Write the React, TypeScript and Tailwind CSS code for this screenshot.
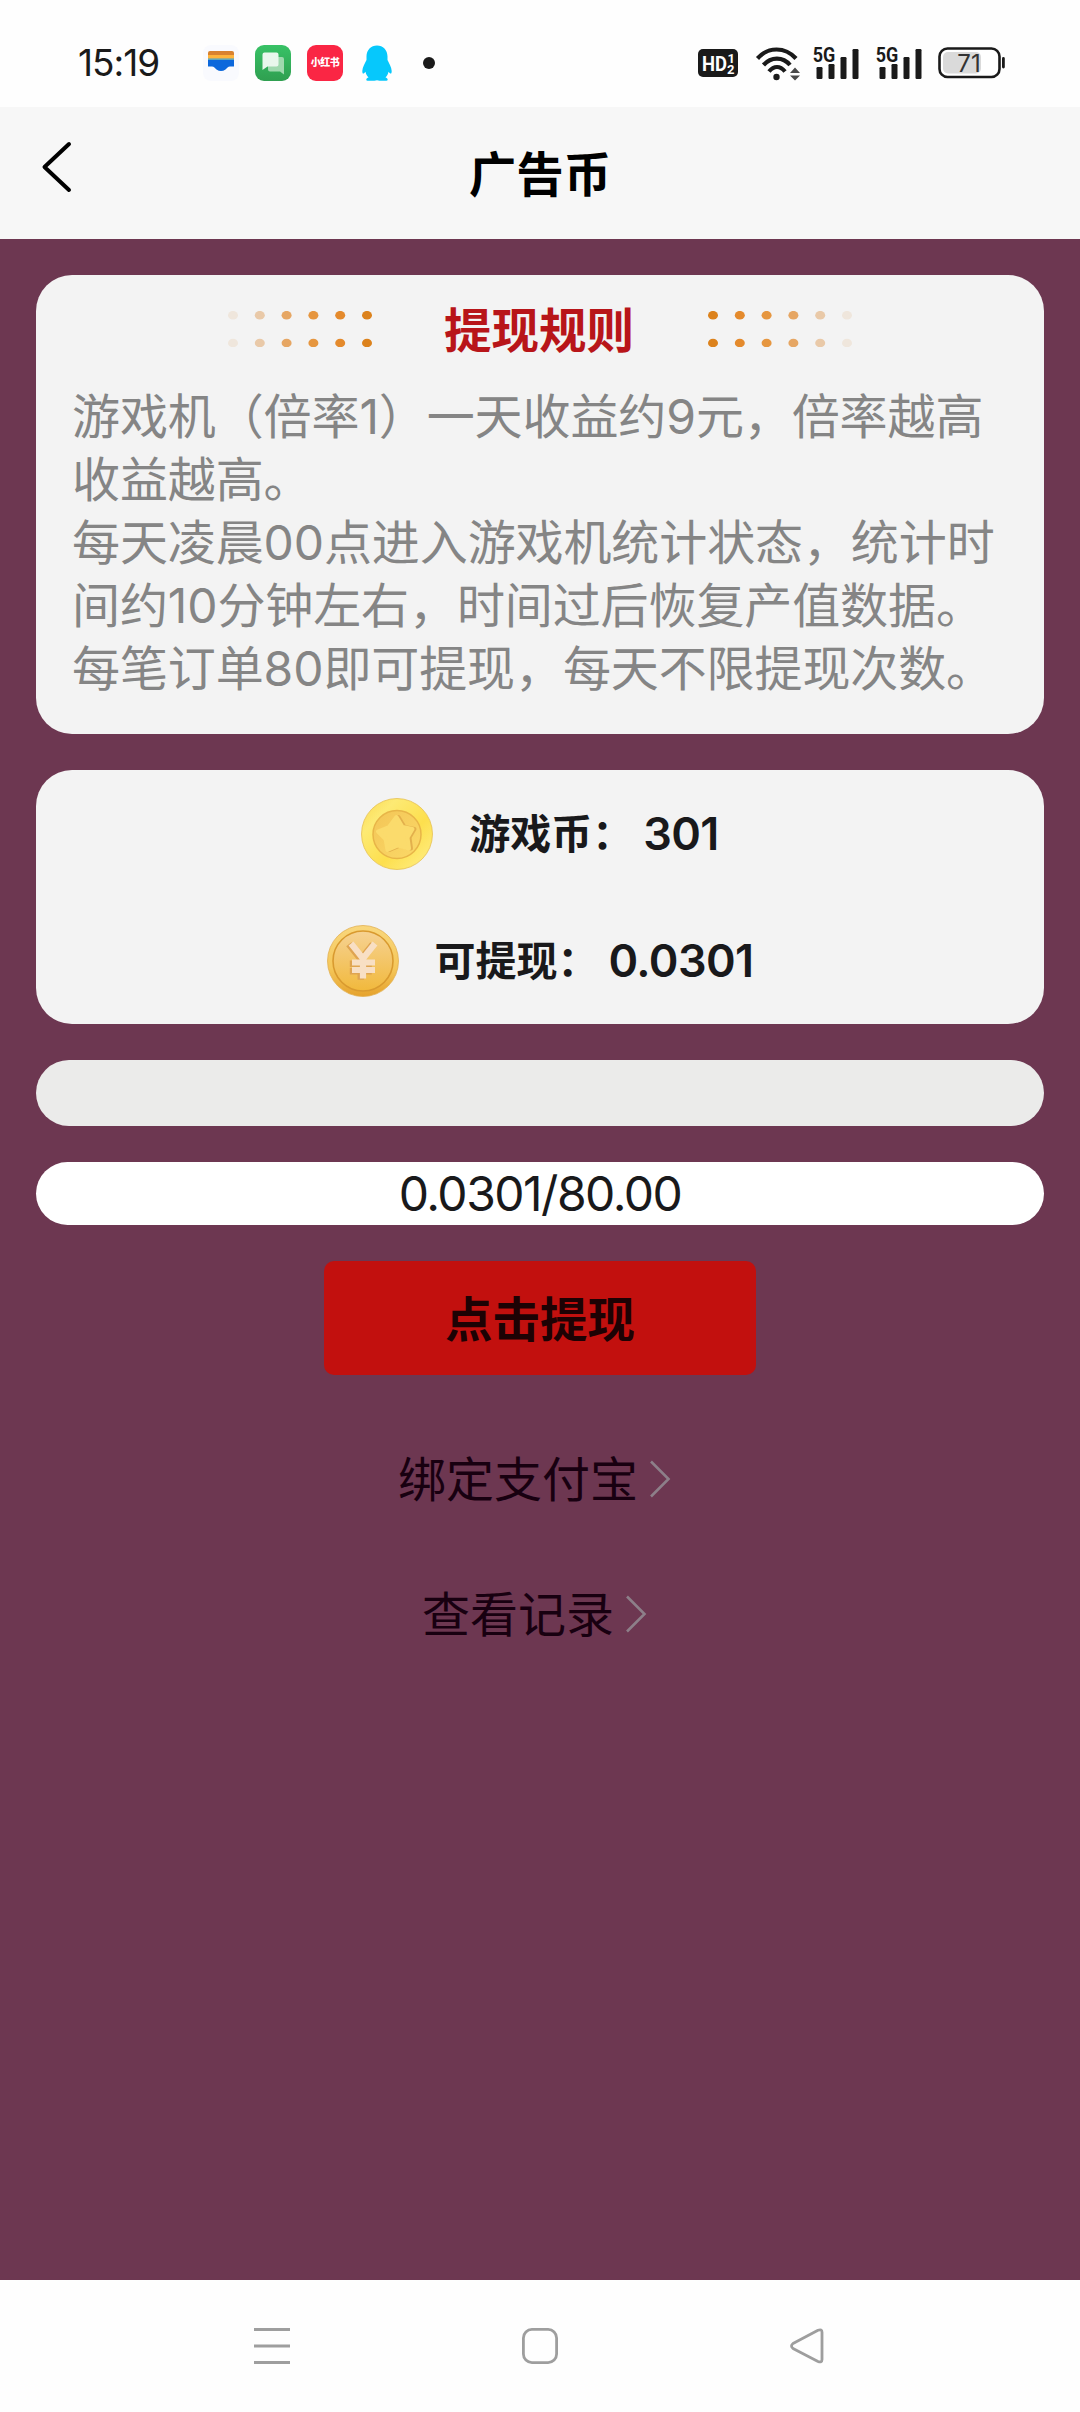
import React from "react";

const rules = [
  "游戏机（倍率1）一天收益约9元，倍率越高",
  "收益越高。",
  "每天凌晨00点进入游戏机统计状态，统计时",
  "间约10分钟左右，时间过后恢复产值数据。",
  "每笔订单80即可提现，每天不限提现次数。",
];

const dotColors = ["#efe6dc", "#e9c9a8", "#e6a663", "#e6963f", "#e48a2c", "#dc821c"];

function Dots({ flip = false }: { flip?: boolean }) {
  const colors = flip ? [...dotColors].reverse() : dotColors;
  return (
    <svg width="144" height="36" viewBox="0 0 144 36">
      {colors.map((c, i) => (
        <g key={i} fill={c}>
          <ellipse cx={5 + i * 26.8} cy="4.2" rx="5" ry="4.3" />
          <ellipse cx={5 + i * 26.8} cy="32" rx="5" ry="4.3" />
        </g>
      ))}
    </svg>
  );
}

function Signal() {
  return (
    <svg width="46" height="38" viewBox="0 -4 46 38" fill="#1a1a1a">
      <text x="-0.2" y="15.5" fontSize="21" fontWeight="700" fontFamily="Roboto, sans-serif" textLength="22.500" lengthAdjust="spacingAndGlyphs">5G</text>
      <rect x="3.5" y="21" width="6" height="12" rx="1.2" />
      <rect x="15.5" y="18" width="6" height="15" rx="1.2" />
      <rect x="27.5" y="11" width="6" height="22" rx="1.2" />
      <rect x="39.5" y="3" width="6" height="30" rx="1.2" />
    </svg>
  );
}

function StatusBar() {
  return (
    <div className="flex h-[107px] items-center bg-[#fefefe] pt-[18px] pl-[78px] text-[#1a1a1a]">
      <div className="w-[125px] text-[37px] leading-[40px] tracking-[-1px]">15:19</div>
      <svg className="mr-4" width="36" height="36" viewBox="0 0 36 36">
        <rect width="36" height="36" rx="8" fill="#f9fafe" />
        <path d="M5 10V8q0-2 2-2h22q2 0 2 2v2z" fill="#d9822f" />
        <path d="M5 10h26v4H5z" fill="#ffb43c" />
        <path d="M5 13.4h26v2H5z" fill="#5fa6bd" />
        <path d="M5 15h26v6.500h-4c-2 0-3 1.500-4.500 3q-4.500 3-9 0c-1.500-1.500-2.500-3-4.500-3H5z" fill="#0c68dc" />
      </svg>
      <svg className="mr-4" width="36" height="36" viewBox="0 0 36 36">
        <defs>
          <linearGradient id="msg" x1="0" y1="0" x2="0" y2="1">
            <stop offset="0" stopColor="#38c266" />
            <stop offset="1" stopColor="#2f9f50" />
          </linearGradient>
        </defs>
        <rect width="36" height="36" rx="9" fill="url(#msg)" />
        <path d="M15 12h12q2 0 2 2v15.500l-4-3H15q-2 0-2-2V14q0-2 2-2z" fill="#9fd9ae" />
        <path d="M9.500 7.500h12q2 0 2 2v10q0 2-2 2h-9L7.500 25V9.500q0-2 2-2z" fill="#e9f7ec" />
      </svg>
      <div className="mr-[19px] flex h-9 w-9 items-center justify-center rounded-[9px] bg-[#fa2644] text-[10px] font-black tracking-[-0.5px] text-white">
        小红书
      </div>
      <svg width="30" height="36" viewBox="0 0 30 36" fill="#06c8fc">
        <path d="M15 .5C21 .5 25.500 5 25.500 11.500v3.500C27 18 29.500 22 29.700 26c0 3-1.200 3.500-3.200.8-.5 2.500-1.500 4.200-3 5.700 2.500.8 3 3.200 1 3.200H17.500q-2.500-1-5 0H5.500c-2 0-1.500-2.400 1-3.200-1.500-1.500-2.500-3.200-3-5.700C1.500 29.500.3 29 .3 26 .5 22 3 18 4.500 15v-3.500C4.500 5 9 .5 15 .5z" />
      </svg>
      <div className="ml-[31px] h-3 w-3 rounded-full bg-[#1a1a1a]" />
      <div className="ml-[263px] flex items-center">
        <svg width="40" height="28" viewBox="0 0 40 28">
          <rect width="40" height="28" rx="5" fill="#1a1a1a" />
          <g fill="#fff" fontFamily="Roboto, sans-serif" fontWeight="700">
            <text x="4" y="21.500" fontSize="21" textLength="25" lengthAdjust="spacingAndGlyphs">HD</text>
            <text x="29.500" y="13.500" fontSize="13">1</text>
            <text x="29" y="25" fontSize="13">2</text>
          </g>
        </svg>
        <svg className="ml-[17px]" width="46" height="36" viewBox="0 0 46 36" fill="none" stroke="#1a1a1a" strokeWidth="4.200">
          <path d="M2.500 13.500C13 1.500 30 1.500 41 13.500" />
          <path d="M8.500 20C16 11.500 28 11.500 35 20" />
          <path d="M14 26.500C19 20.500 25 20.500 30 26.500" />
          <circle cx="21.500" cy="32" r="3.200" fill="#1a1a1a" stroke="none" />
          <path d="M40 22.500l5 5.500H35zM40 35.500l5-5H35z" fill="#4a4a4a" stroke="none" />
        </svg>
        <div className="mb-[4px] ml-[12px] flex gap-[17px]">
          <Signal />
          <Signal />
        </div>
        <svg className="ml-[16px]" width="68" height="32" viewBox="0 0 68 32">
          <rect x="1.500" y="1.500" width="60" height="28.500" rx="8" fill="#fff" stroke="#1a1a1a" strokeWidth="2.600" />
          <rect x="5" y="5" width="38" height="21.500" rx="5" fill="#dadada" />
          <rect x="64" y="10" width="2.800" height="11.500" rx="1.400" fill="#1a1a1a" />
          <text x="31" y="24.500" textAnchor="middle" fontSize="24" fontFamily="Inter, sans-serif" fill="#333">71</text>
        </svg>
      </div>
    </div>
  );
}

function StarCoin() {
  return (
    <svg width="72" height="72" viewBox="0 0 72 72">
      <defs>
        <linearGradient id="rim1" x1="0" y1="0" x2="1" y2="1">
          <stop offset="0" stopColor="#fbd84f" />
          <stop offset=".25" stopColor="#fdea74" />
          <stop offset=".6" stopColor="#fddf4e" />
          <stop offset="1" stopColor="#fff08a" />
        </linearGradient>
        <linearGradient id="in1" x1="0" y1="0" x2="1" y2="1">
          <stop offset="0" stopColor="#f3c556" />
          <stop offset="1" stopColor="#fbd968" />
        </linearGradient>
      </defs>
      <circle cx="36" cy="36" r="35.500" fill="url(#rim1)" stroke="#e6c04f" strokeWidth=".8" />
      <circle cx="36" cy="36.500" r="24" fill="url(#in1)" stroke="#e8b548" strokeWidth="1.500" />
      <path d="M37.500 19l6 10 10 2-5 8.500 1.500 11-11-3-10.500 4.500-2-11-7.500-7.500 11-4.500z" fill="#e3b04c" stroke="#e3b04c" strokeWidth="4" strokeLinejoin="round" />
      <path d="M35.500 19l6 10 10 2-5 8.500 1.500 11-11-3-10.500 4.500-2-11-7.500-7.500 11-4.500z" fill="#fbdb6c" stroke="#fbdb6c" strokeWidth="4" strokeLinejoin="round" />
    </svg>
  );
}

function YuanCoin() {
  return (
    <svg width="72" height="72" viewBox="0 0 72 72">
      <defs>
        <linearGradient id="rim2" x1="0" y1="0" x2="0" y2="1">
          <stop offset="0" stopColor="#f9d77c" />
          <stop offset=".6" stopColor="#f5c75a" />
          <stop offset="1" stopColor="#e5a22c" />
        </linearGradient>
        <linearGradient id="in2" x1="0" y1="0" x2="0" y2="1">
          <stop offset="0" stopColor="#f6d293" />
          <stop offset="1" stopColor="#f1b93c" />
        </linearGradient>
      </defs>
      <circle cx="36" cy="36" r="35.500" fill="url(#rim2)" stroke="#e2b050" strokeWidth=".8" />
      <circle cx="36" cy="36" r="30" fill="url(#in2)" stroke="#d99a2f" strokeWidth="1.600" />
      <g fill="none">
        <path d="M23 18.500l12 15 12-15M35 33v21M24 38h22M24 45.500h22" stroke="#dfa451" strokeWidth="6.500" transform="translate(-1.200 .8)" />
        <path d="M24 18.500l12 15 12-15M36 33v20.500M25 37.500h23M25 45h23" stroke="#f8dfc4" strokeWidth="6.200" />
      </g>
    </svg>
  );
}

function Balance({ icon, label, value }: { icon: React.ReactNode; label: string; value: string }) {
  return (
    <div className="flex h-[127px] items-center justify-center text-[#19191b]">
      {icon}
      <span className="ml-9 w-[174px] pt-[2px] text-[41px] font-bold whitespace-nowrap">{label}</span>
      <span className="text-[45px] font-semibold tracking-[-0.6px]">{value}</span>
    </div>
  );
}

function LinkRow({ children }: { children: React.ReactNode }) {
  return (
    <button className="flex h-[135px] items-center justify-center text-[48px] text-[#180010]">
      <span className="pt-[2px]">{children}</span>
      <svg width="44" height="44" viewBox="0 0 44 44" fill="none" stroke="#8d7f89" strokeWidth="2.600">
        <path d="M13 4.500L30.500 22 13 39.500" />
      </svg>
    </button>
  );
}

export default function App() {
  return (
    <div lang="zh-CN" className="flex h-[2412px] w-[1080px] flex-col overflow-hidden bg-[#6d3751] font-[Inter,'Noto_Sans_CJK_SC',sans-serif]">
      <StatusBar />
      <header className="grid h-[132px] grid-cols-[120px_1fr_120px] items-center bg-[#f7f7f7]">
        <svg className="mb-[12px] ml-[40px]" width="34" height="52" viewBox="0 0 34 52" fill="none" stroke="#000" strokeWidth="4" strokeLinecap="round" strokeLinejoin="round">
          <path d="M29 3L4.500 26 29 49" />
        </svg>
        <h1 className="pt-[3px] text-center text-[47.500px] font-bold text-black">广告币</h1>
      </header>

      <main className="flex flex-1 flex-col gap-9 px-9 pt-9">
        <section className="h-[459px] rounded-[36px] bg-[#f3f3f3] px-9 pt-[18px]">
          <div className="flex h-[72px] items-center justify-center gap-[72px]">
            <Dots />
            <h2 className="w-[192px] pt-[4px] text-[47.500px] leading-[72px] font-bold whitespace-nowrap text-[#b81519]">提现规则</h2>
            <Dots flip />
          </div>
          <div className="mt-[20px] text-[48px] leading-[63px] tracking-[-0.1px] whitespace-nowrap text-[#858585]">
            {rules.map((line) => (
              <p key={line}>{line}</p>
            ))}
          </div>
        </section>

        <section className="h-[254px] rounded-[36px] bg-[#f3f3f3]">
          <Balance icon={<StarCoin />} label="游戏币：" value="301" />
          <Balance icon={<YuanCoin />} label="可提现：" value="0.0301" />
        </section>

        <div className="h-[66px] rounded-full bg-[#ebebea]" />
        <div className="h-[63px] rounded-full bg-white text-center text-[48px] leading-[64px] tracking-[-1.500px] text-[#19191b]">
          0.0301/80.00
        </div>

        <div className="flex flex-col items-center">
          <button className="mb-[36px] h-[114px] w-[432px] rounded-[10px] bg-[#c2100e] pt-[3px] text-[47.500px] font-bold text-[#1d0204]">
            点击提现
          </button>
          <LinkRow>绑定支付宝</LinkRow>
          <LinkRow>查看记录</LinkRow>
        </div>
      </main>

      <nav className="flex h-[132px] items-center justify-between bg-[#fefefe] px-[254px]">
        <svg width="36" height="36" viewBox="0 0 36 36" stroke="#9e9e9e" strokeWidth="3">
          <path d="M0 1.500h36M0 18h36M0 34.500h36" />
        </svg>
        <svg width="36" height="36" viewBox="0 0 36 36" fill="none" stroke="#9e9e9e" strokeWidth="2.800">
          <rect x="1.400" y="1.400" width="33.200" height="33.200" rx="8.500" />
        </svg>
        <svg width="36" height="36" viewBox="1.500 0 36 36" fill="none" stroke="#9e9e9e" strokeWidth="2.800" strokeLinejoin="round">
          <path d="M29.500 2.300L4.500 15.500Q1.500 18 4.500 20.500L29.500 33.500Q33.500 35 33.500 31.500V4.300Q33.500 .7 29.500 2.300z" />
        </svg>
      </nav>
    </div>
  );
}
